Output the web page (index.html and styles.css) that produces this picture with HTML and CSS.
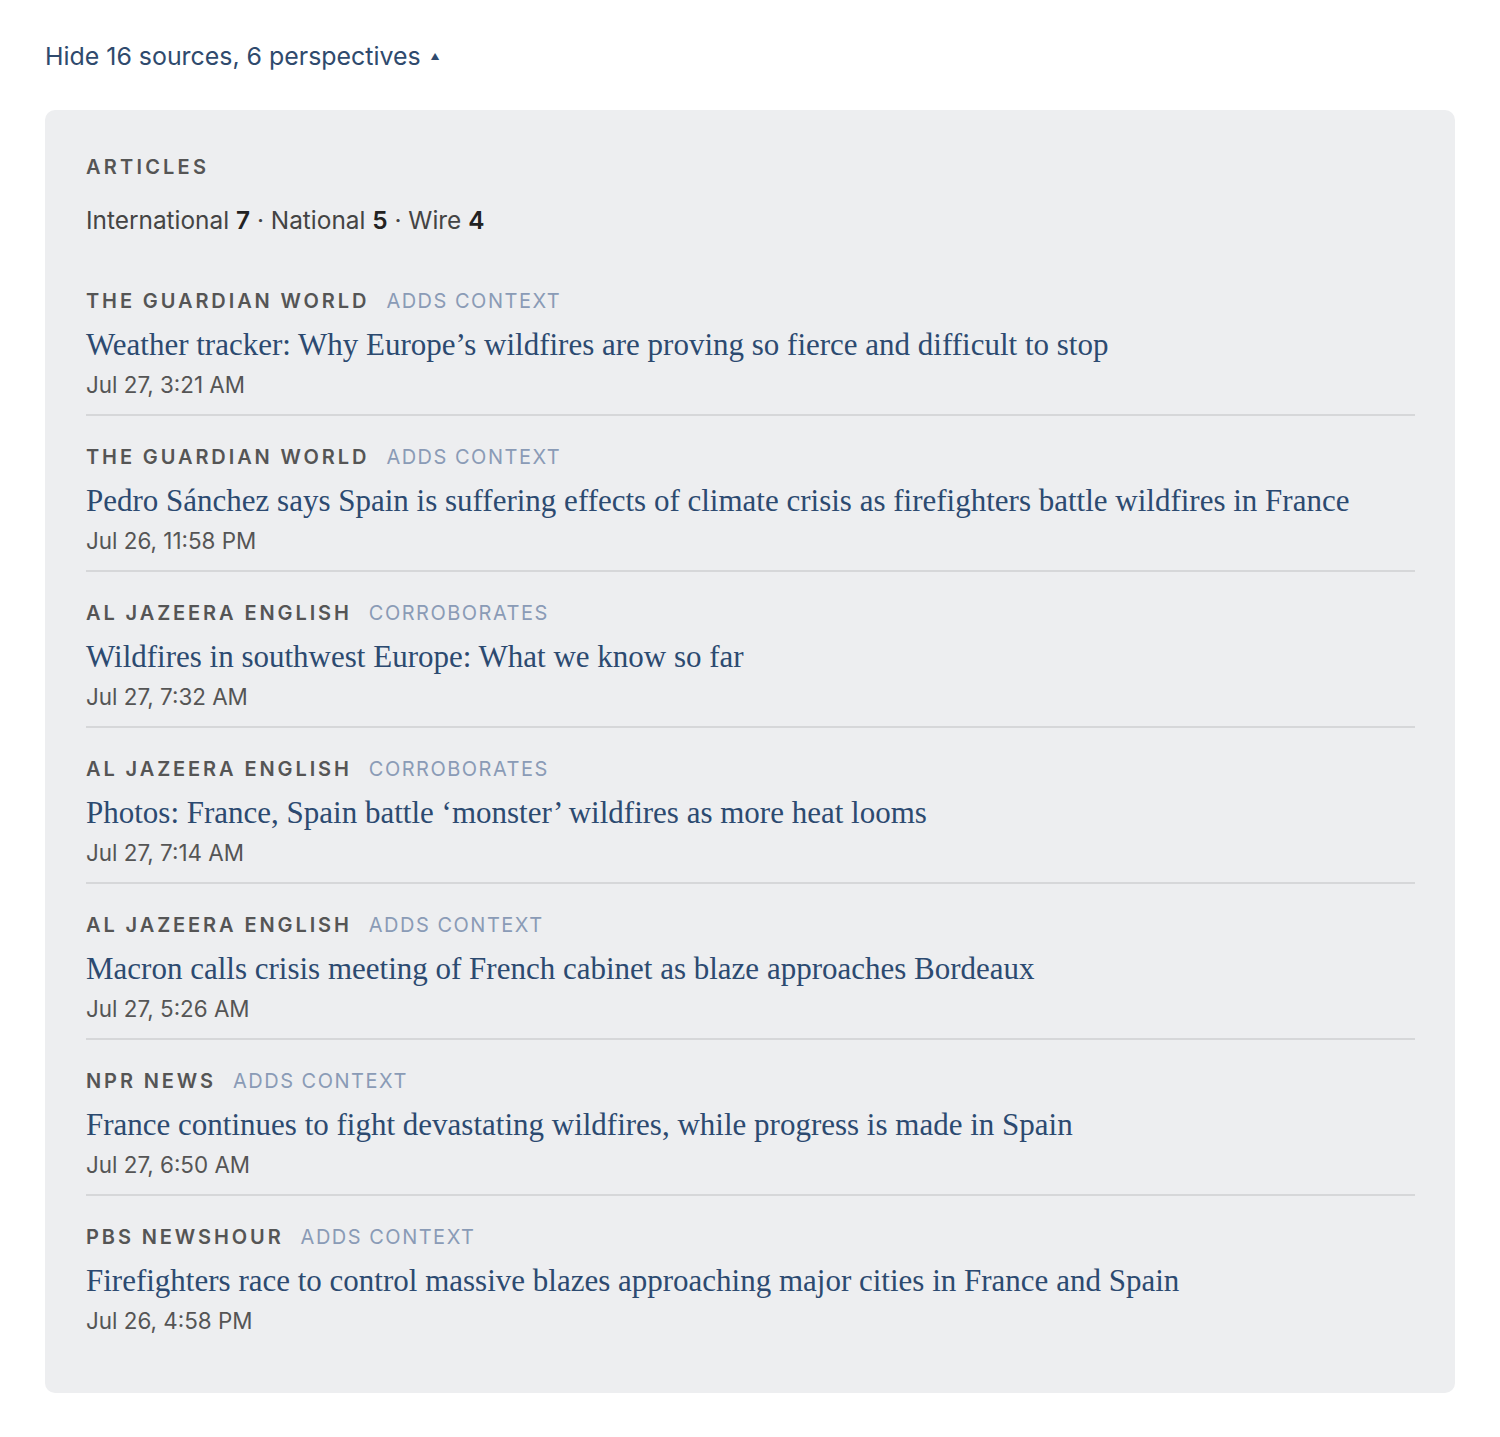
FILE: index.html
```html
<!DOCTYPE html>
<html lang="en">
<head>
    <meta charset="UTF-8">
    <title>Sources</title>
    <link rel="stylesheet" href="styles.css">
</head>
<body>
    <button class="toggle">Hide 16 sources, 6 perspectives <span class="caret">&#9650;</span></button>

    <section class="panel">
        <h2 class="panel-title">Articles</h2>
        <p class="counts">International <b>7</b> · National <b>5</b> · Wire <b>4</b></p>

        <ul class="articles">
            <li class="article">
                <div class="meta"><span class="source">The Guardian World</span><span class="tag">Adds context</span></div>
                <a class="headline" href="#">Weather tracker: Why Europe’s wildfires are proving so fierce and difficult to stop</a>
                <div class="date">Jul 27, 3:21 AM</div>
            </li>
            <li class="article">
                <div class="meta"><span class="source">The Guardian World</span><span class="tag">Adds context</span></div>
                <a class="headline" href="#">Pedro Sánchez says Spain is suffering effects of climate crisis as firefighters battle wildfires in France</a>
                <div class="date">Jul 26, 11:58 PM</div>
            </li>
            <li class="article">
                <div class="meta"><span class="source">Al Jazeera English</span><span class="tag">Corroborates</span></div>
                <a class="headline" href="#">Wildfires in southwest Europe: What we know so far</a>
                <div class="date">Jul 27, 7:32 AM</div>
            </li>
            <li class="article">
                <div class="meta"><span class="source">Al Jazeera English</span><span class="tag">Corroborates</span></div>
                <a class="headline" href="#">Photos: France, Spain battle ‘monster’ wildfires as more heat looms</a>
                <div class="date">Jul 27, 7:14 AM</div>
            </li>
            <li class="article">
                <div class="meta"><span class="source">Al Jazeera English</span><span class="tag">Adds context</span></div>
                <a class="headline" href="#">Macron calls crisis meeting of French cabinet as blaze approaches Bordeaux</a>
                <div class="date">Jul 27, 5:26 AM</div>
            </li>
            <li class="article">
                <div class="meta"><span class="source">NPR News</span><span class="tag">Adds context</span></div>
                <a class="headline" href="#">France continues to fight devastating wildfires, while progress is made in Spain</a>
                <div class="date">Jul 27, 6:50 AM</div>
            </li>
            <li class="article">
                <div class="meta"><span class="source">PBS NewsHour</span><span class="tag">Adds context</span></div>
                <a class="headline" href="#">Firefighters race to control massive blazes approaching major cities in France and Spain</a>
                <div class="date">Jul 26, 4:58 PM</div>
            </li>
        </ul>
    </section>
</body>
</html>
```

FILE: styles.css
```css
body { margin: 0; padding: 36px 45px 45px; font-family: Inter, "Liberation Sans", Arial, sans-serif; background: #fff; }

.toggle { border: 0; background: none; padding: 0; font: inherit; font-size: 24.9px; color: #2f4a6d; cursor: pointer; line-height: 40px; }
.toggle .caret { font-size: 9px; vertical-align: 5px; margin-left: 3px; }

.panel { margin-top: 33px; background: #edeef0; border-radius: 10px; padding: 40px 40px 43px 41px; }
.panel-title { margin: 0; font-size: 20px; font-weight: 600; letter-spacing: 3.2px; text-transform: uppercase; color: #555; line-height: 34px; }
.counts { margin: 19px 0 0; font-size: 24.4px; color: #444; line-height: 34px; }
.counts b { color: #222; font-weight: 600; }

.articles { list-style: none; margin: 23px 0 0; padding: 0; }
.article { padding: 26px 0 13px; border-bottom: 2px solid #d6d7d9; }
.article:last-child { border-bottom: 0; }

.meta { font-size: 20px; line-height: 30px; text-transform: uppercase; }
.source { font-weight: 600; color: #555; letter-spacing: 2.9px; margin-right: 17px; }
.tag { color: #8a9bb6; letter-spacing: 1.5px; }

.headline { display: block; margin-top: 9px; font-family: "Liberation Serif", "Times New Roman", serif; font-size: 31px; line-height: 40px; color: #2c4a70; text-decoration: none; }
.date { margin-top: 4px; font-size: 22.4px; line-height: 32px; color: #555; }
```
